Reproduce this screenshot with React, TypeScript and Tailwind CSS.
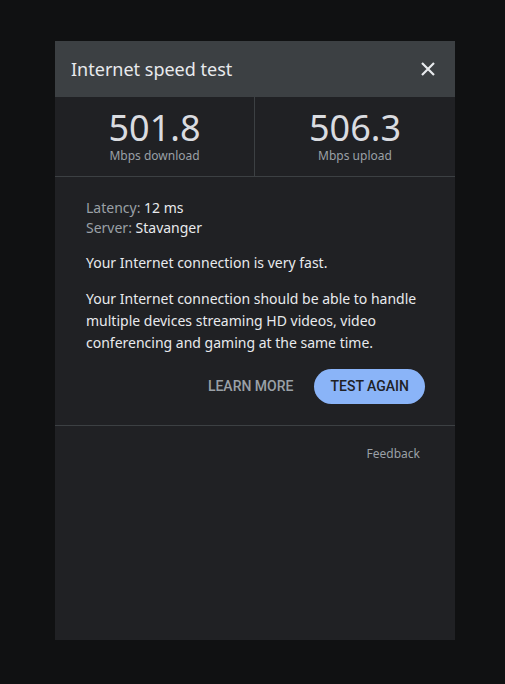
import React from "react";

const SpeedTestDialog: React.FC = () => {
  return (
    <div className="min-h-screen w-full bg-[#101112] pt-[41px] font-['Noto_Sans',sans-serif]">
      <div className="ml-[55px] flex h-[599px] w-[400px] flex-col bg-[#202124]">
        {/* header */}
        <div className="flex h-[56px] items-center justify-between bg-[#3c4043] pl-4 pr-[15px]">
          <h1 className="text-[18px] text-[#e8eaed]">Internet speed test</h1>
          <button className="text-[#e8eaed]">
            <svg width="24" height="24" viewBox="0 0 24 24">
              <path d="M6 6 L18 18 M18 6 L6 18" stroke="currentColor" strokeWidth="2.2" />
            </svg>
          </button>
        </div>

        {/* results */}
        <div className="grid grid-cols-2 border-b border-[#3c4043]">
          <div className="flex h-[79px] flex-col items-center justify-center border-r border-[#3c4043] pt-[2px]">
            <span className="text-[36px] leading-[30px] text-[#dadce0]">501.8</span>
            <span className="mt-[6px] text-[12px] leading-[14px] text-[#9aa0a6]">Mbps download</span>
          </div>
          <div className="flex h-[79px] flex-col items-center justify-center pt-[2px]">
            <span className="text-[36px] leading-[30px] text-[#dadce0]">506.3</span>
            <span className="mt-[6px] text-[12px] leading-[14px] text-[#9aa0a6]">Mbps upload</span>
          </div>
        </div>

        {/* details */}
        <div className="px-[31px] pt-[21px] text-[14px] text-[#e8eaed]">
          <p className="leading-[20px]">
            <span className="text-[#9aa0a6]">Latency:</span> 12 ms
          </p>
          <p className="leading-[20px]">
            <span className="text-[#9aa0a6]">Server:</span> Stavanger
          </p>
          <p className="mt-[15px] leading-[20px]">Your Internet connection is very fast.</p>
          <p className="mt-[15px] leading-[22px]">
            Your Internet connection should be able to handle multiple devices streaming HD videos, video
            conferencing and gaming at the same time.
          </p>
          <div className="mt-[15px] flex items-center justify-end gap-[21px] pb-[21px]">
            <button className="font-['Roboto',sans-serif] text-[14px] font-medium text-[#9aa0a6]">LEARN MORE</button>
            <button className="-mr-[1px] h-[35px] rounded-full bg-[#8ab4f8] px-4 font-['Roboto',sans-serif] text-[14px] font-medium text-[#202124]">
              TEST AGAIN
            </button>
          </div>
        </div>

        <div className="border-t border-[#3c4043] px-[35px] pt-[14px] text-right">
          <a className="text-[12px] text-[#9aa0a6]">Feedback</a>
        </div>
      </div>
    </div>
  );
};

export default SpeedTestDialog;
